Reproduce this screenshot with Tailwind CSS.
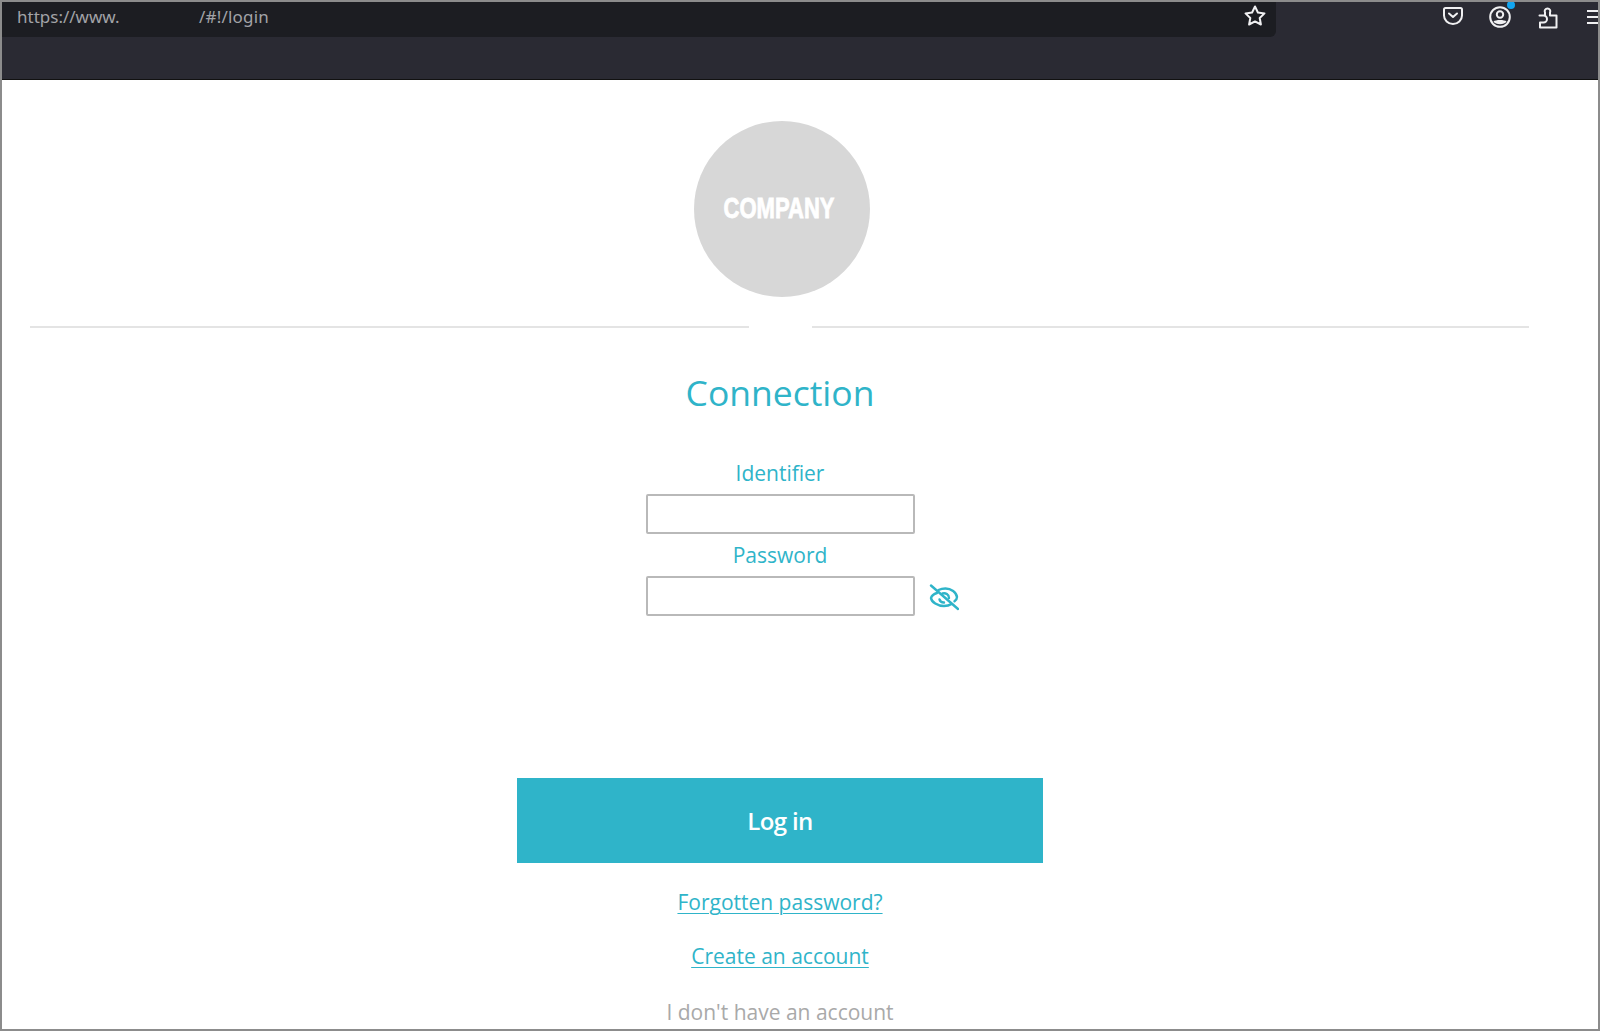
<!DOCTYPE html>
<html lang="en">
<head>
<meta charset="utf-8">
<script src="https://cdn.jsdelivr.net/npm/@tailwindcss/browser@4"></script>
<title>Login</title>
</head>
<body class="h-[1031px] overflow-hidden bg-white font-['Open_Sans',sans-serif]">
<div class="h-[1031px] flex flex-col border-2 border-[#8c8c8c] overflow-hidden">
  <header class="h-[78px] shrink-0 bg-[#2a2a33] border-b border-[#111] relative">
    <div class="h-[35px] w-[1274px] bg-[#1c1d22] rounded-br-md flex items-center justify-between pl-[15px] pr-[9px] pb-[5px]">
      <div class="flex text-[17px] text-[#a2a3a7] font-['Noto_Sans',sans-serif]">
        <span class="w-[182px]">https://www.</span><span class="tracking-[0.2px]">/#!/login</span>
      </div>
      <svg class="-translate-y-px" width="24" height="24" viewBox="0 0 24 24" fill="none" stroke="#f0f0f2" stroke-width="2" stroke-linejoin="round"><path d="M12 2.500l2.900 6 6.600.9-4.800 4.600 1.200 6.500-5.900-3.100-5.900 3.100 1.200-6.500-4.800-4.600 6.600-.9z"/></svg>
    </div>
    <div class="absolute top-[1px] right-0 h-[28px] flex items-center">
      <svg class="shrink-0 -translate-y-px" width="20" height="20" viewBox="0 0 20 20" fill="none" stroke="#f0f0f2" stroke-width="2" stroke-linecap="round" stroke-linejoin="round"><path d="M2.500 2h15a1.500 1.500 0 0 1 1.500 1.500v6a9 8.500 0 0 1-18 0v-6a1.500 1.500 0 0 1 1.500-1.500z"/><path d="M6 7.500l4 3.500 4-3.500"/></svg>
      <div class="relative shrink-0 w-[22px] h-[22px] ml-[26px]">
        <svg width="22" height="22" viewBox="0 0 22 22" fill="none" stroke="#f0f0f2" stroke-width="2"><circle cx="11" cy="11" r="9.800"/><circle cx="11" cy="8.500" r="3.200"/><path d="M4.500 15.500c2-2 11-2 13 0-2 3.500-11 3.500-13 0z" fill="#f0f0f2" stroke="none"/></svg>
        <span class="absolute -top-[5px] -right-[4px] w-[8px] h-[8px] rounded-full bg-[#12a5f0]"></span>
      </div>
      <svg class="shrink-0 ml-[27px]" width="20" height="23" viewBox="0 0 20 23" fill="none" stroke="#f0f0f2" stroke-width="2" stroke-linejoin="round"><path d="M1.500 9.500H7V6.500a2.800 2.800 0 1 1 5 0v3h6.500v12H2v-5h3.500a2.500 2.500 0 0 0 0-7z"/></svg>
      <div class="shrink-0 w-[11px] flex flex-col gap-[4px] ml-[29px]">
        <span class="h-[2px] bg-[#f0f0f2]"></span><span class="h-[2px] bg-[#f0f0f2]"></span><span class="h-[2px] bg-[#f0f0f2]"></span>
      </div>
    </div>
  </header>

  <main class="w-[1556px] flex flex-col items-center pt-[41px] text-[#2fb4c9]">
    <div class="w-[176px] h-[176px] ml-[3px] rounded-full bg-[#d7d7d7] flex items-center justify-center overflow-hidden">
      <span class="text-white text-[29px] leading-none font-bold font-['Liberation_Sans',sans-serif] scale-x-[0.76] -translate-x-[2px] -translate-y-[1px] [-webkit-text-stroke:0.8px_white]">COMPANY</span>
    </div>
    <div class="w-full mt-[29px] pl-[28px] pr-[29px] flex justify-between">
      <div class="w-[719px] h-[2px] bg-[#e4e4e4]"></div>
      <div class="w-[717px] h-[2px] bg-[#e4e4e4]"></div>
    </div>
    <h1 class="mt-[40px] text-[35.500px] leading-[48px] font-normal">Connection</h1>
    <label class="mt-[42px] text-[21px] leading-[30px] font-medium">Identifier</label>
    <div class="mt-[6px] w-[269px] h-[40px] rounded-[2px] border-2 border-[#b9b9b9] bg-white"></div>
    <label class="mt-[6px] text-[21px] leading-[30px] font-medium">Password</label>
    <div class="relative mt-[6px] w-[269px] h-[40px] rounded-[2px] border-2 border-[#b9b9b9] bg-white">
      <svg class="absolute left-[281px] top-[6px]" width="30" height="27" viewBox="0 0 30 27" fill="none" stroke="#2fb4c9" stroke-width="2.400" stroke-linecap="round"><path d="M8 9C5 10 2.500 12 2 14c.5 4 6.500 8 13 8 3 0 5.500-.7 7.500-2"/><path d="M9.500 6C12 4.800 14 4.500 16.500 4.500 22 4.500 27.500 8.500 28 13c0 1.800-1 3.200-2.500 4.300"/><path d="M10.500 15.500a4.500 4.500 0 0 0 4.500 3"/><path d="M13.500 9.500c3-1 6.500 1 6.500 4.500"/><path d="M2 1.500L29 25"/></svg>
    </div>
    <button class="mt-[162px] w-[526px] h-[85px] bg-[#2fb4c9] text-white text-[24px] font-semibold tracking-[-0.6px]">Log in</button>
    <a href="#" class="mt-[24px] text-[21px] leading-[30px] font-medium underline underline-offset-[3px] decoration-1">Forgotten password?</a>
    <a href="#" class="mt-[24px] text-[21px] leading-[30px] font-medium underline underline-offset-[3px] decoration-1">Create an account</a>
    <p class="mt-[26px] text-[21px] leading-[30px] font-medium text-[#a9a9a9]">I don't have an account</p>
  </main>
</div>
</body>
</html>
